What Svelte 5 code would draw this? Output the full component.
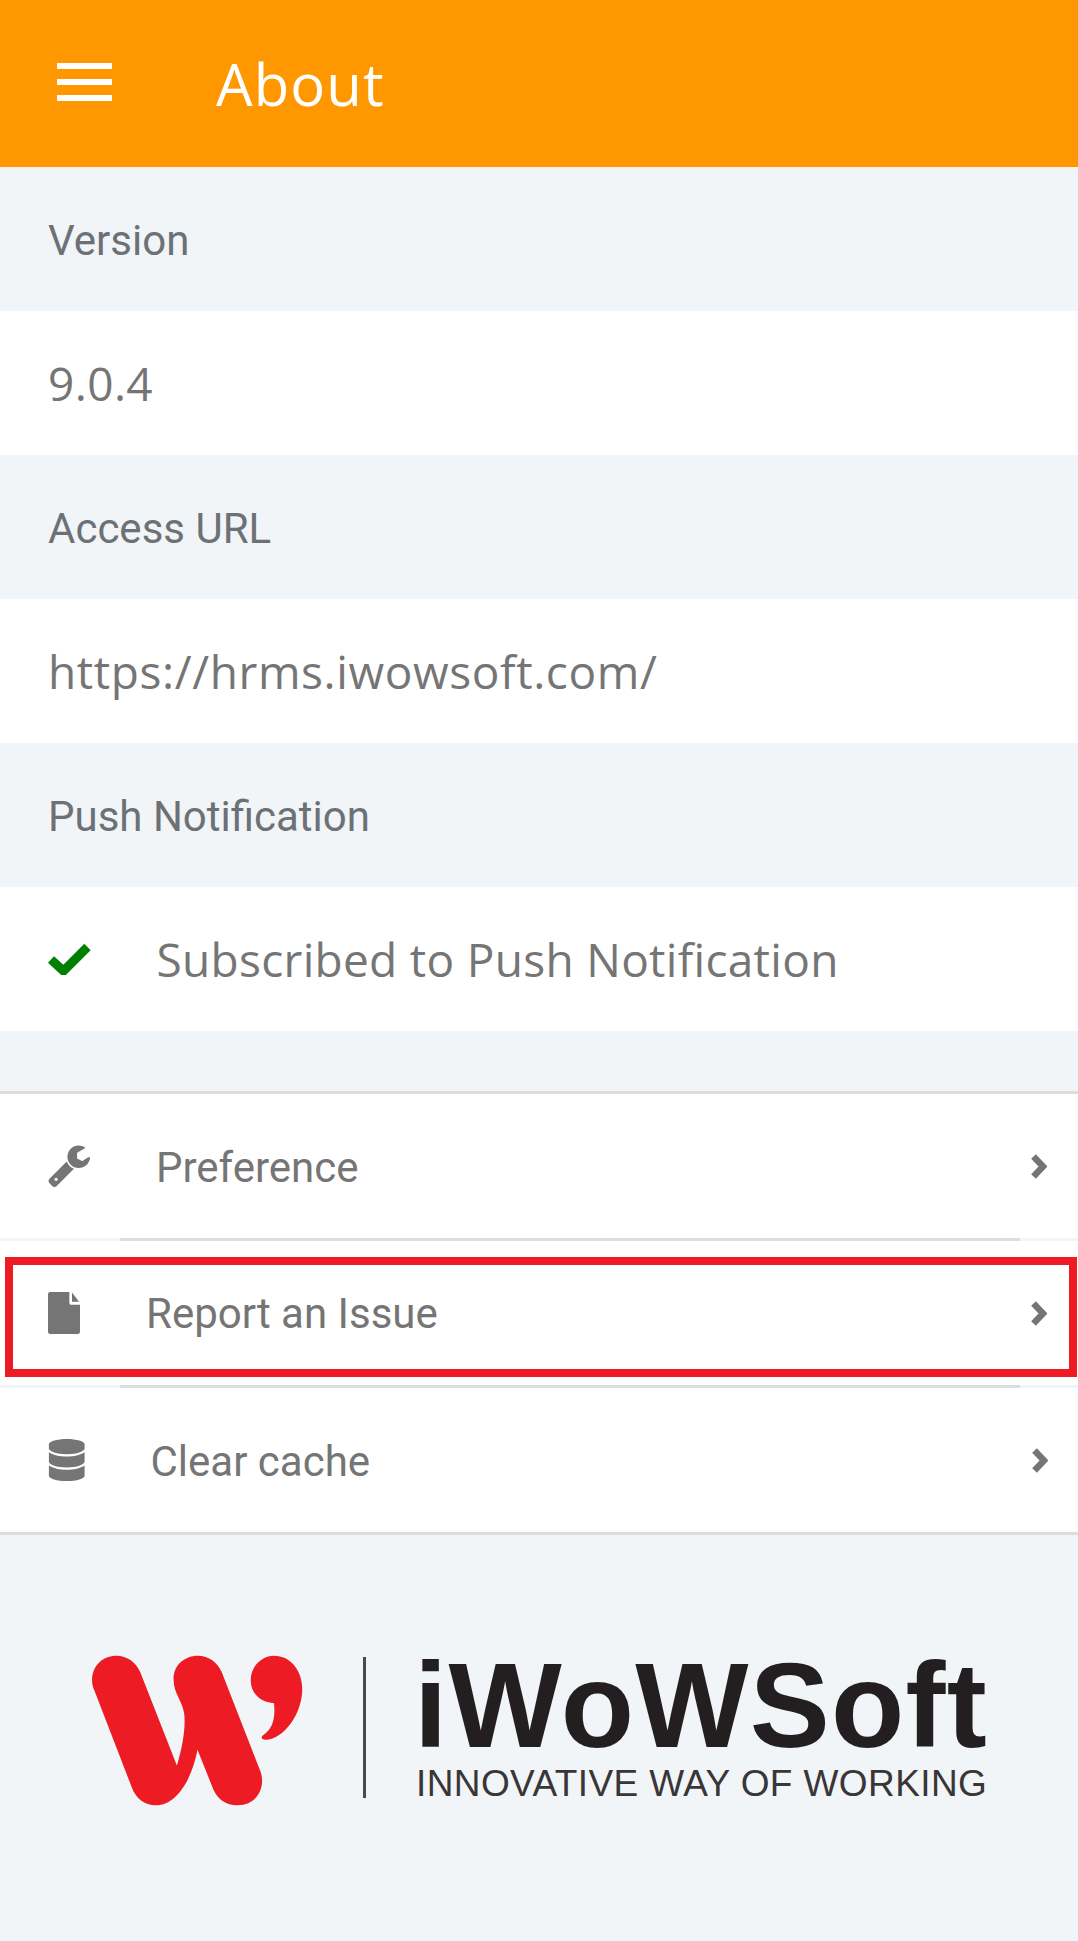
<script>
	const sections = [
		{ label: 'Version', value: '9.0.4', spacing: 0.4 },
		{ label: 'Access URL', value: 'https://hrms.iwowsoft.com/', spacing: 0.6 },
		{ label: 'Push Notification', value: 'Subscribed to Push Notification', spacing: 0.3, check: true }
	];
</script>

<div class="page">
	<header class="topbar">
		<button class="menu" aria-label="Menu"><span></span><span></span><span></span></button>
		<h1>About</h1>
	</header>

	{#each sections as s}
		<div class="label">{s.label}</div>
		<div class="value">
			{#if s.check}
				<svg class="check" viewBox="0 0 42.500 32"><path d="M3 16.500L15.500 28L39.500 4" /></svg>
			{/if}
			<span style="letter-spacing: {s.spacing}px">{s.value}</span>
		</div>
	{/each}

	<div class="menu-list">
		<div class="row">
			<svg class="icon wrench" viewBox="64 128 1662 1664"><path d="M448 1472q0-26-19-45t-45-19-45 19-19 45 19 45 45 19 45-19 19-45zm644-420l-682 682q-37 37-90 37-52 0-90-37l-106-108q-38-36-38-90 0-53 38-91l681-681q39 98 114.500 173.500t173.500 114.500zm634-435q0 39-23 106-47 134-164.500 217.500t-258.500 83.500q-185 0-316.500-131.500t-131.500-316.500 131.500-316.500 316.500-131.500q58 0 121.500 16.500t107.500 46.500q16 11 16 28t-16 28l-293 169v224l193 107q5-3 79-48.500t135.500-81 70.500-35.500q15 0 23.500 10t8.500 25z" /></svg>
			<span class="text">Preference</span>
			<svg class="chevron" viewBox="0 0 17 27"><path d="M3.500 3.500L13 13.500L3.500 23.500" /></svg>
		</div>
		<div class="divider"><i></i></div>
		<div class="report-wrap">
			<div class="row report">
				<svg class="icon file" viewBox="128 0 1536 1792" preserveAspectRatio="none"><path d="M1280 420v-400l340 400h-340zm-128 32q0 40 28 68t68 28h416v1148q0 40-28 68t-68 28h-1344q-40 0-68-28t-28-68v-1600q0-40 28-68t68-28h928v452z" /></svg>
				<span class="text">Report an Issue</span>
				<svg class="chevron" viewBox="0 0 17 27"><path d="M3.500 3.500L13 13.500L3.500 23.500" /></svg>
			</div>
		</div>
		<div class="divider"><i></i></div>
		<div class="row">
			<svg class="icon db" viewBox="0 0 108 127">
				<path d="M0 16C0 7 24 0 54 0S108 7 108 16V28C108 38 84 46 54 46S0 38 0 28Z" />
				<path d="M0 40C12 48 32 53 54 53S96 48 108 40V68C108 78 84 86 54 86S0 78 0 68Z" />
				<path d="M0 80C12 88 32 93 54 93S96 88 108 80V111C108 120 84 127 54 127S0 120 0 111Z" />
			</svg>
			<span class="text">Clear cache</span>
			<svg class="chevron last" viewBox="0 0 17 27"><path d="M3.500 3.500L13 13.500L3.500 23.500" /></svg>
		</div>
	</div>

	<div class="logo">
		<svg class="mark" viewBox="90 70 640 460">
			<path d="M93 150C93 100 130 75 165 75C200 75 225 95 238 125L348 405C365 350 375 290 370 250C365 210 338 190 338 145C338 100 375 75 410 75C445 75 470 95 483 125L600 425C615 470 590 525 530 525C495 525 470 505 458 478L410 358C395 440 350 525 285 525C250 525 225 505 212 470L100 180C95 170 93 160 93 150Z" />
			<path d="M640 75C690 75 725 120 725 175C725 250 670 325 615 328C600 328 600 318 610 312C635 295 645 265 640 218C600 215 570 190 570 148C570 105 605 75 640 75Z" />
		</svg>
		<div class="rule"></div>
		<div class="brand">
			<div class="name">iWoWSoft</div>
			<div class="tag">INNOVATIVE WAY OF WORKING</div>
		</div>
	</div>
</div>

<style>
:global(body) {
	margin: 0;
	background: #f1f5f8;
}

.page {
	width: 1078px;
	height: 1941px;
	background: #f1f5f8;
	overflow: hidden;
	font-family: Roboto, sans-serif;
}

/* Header */

.topbar {
	height: 167px;
	background: #ff9800;
	display: flex;
	align-items: center;
	padding-left: 57px;
}

.menu {
	width: 55px;
	padding: 0;
	border: 0;
	background: none;
	display: flex;
	flex-direction: column;
	gap: 10px;
	margin: 0 104px 3px 0;
}

.menu span {
	height: 6px;
	background: #fff;
}

h1 {
	margin: 0;
	color: #fff;
	font: 500 58px "Open Sans", sans-serif;
	letter-spacing: 1.100px;
}

/* Info sections */

.label {
	height: 142px;
	padding: 2px 0 0 48px;
	display: flex;
	align-items: center;
	font-size: 42px;
	color: #6c7176;
}

.value {
	height: 144px;
	padding-left: 48px;
	background: #fff;
	display: flex;
	align-items: center;
	font: 400 46px "Open Sans", sans-serif;
	color: #757575;
}

.check {
	width: 42.500px;
	height: 32px;
	margin-right: 66px;
	fill: none;
	stroke: #008000;
	stroke-width: 9;
}

/* Menu rows */

.menu-list {
	margin-top: 60px;
	background: #fff;
	border-top: 3px solid #ddd;
	border-bottom: 3px solid #ddd;
}

.row {
	height: 144px;
	padding-left: 48px;
	display: flex;
	align-items: center;
	font-size: 42px;
	color: #757575;
}

.report-wrap {
	padding: 16px 1px 8px 5px;
}

.row.report {
	height: 96px;
	padding: 0 0 8px 35px;
	border: 8px solid #ed1c24;
}

.icon {
	fill: #757575;
	margin-right: 65px;
	flex: none;
}

.wrench {
	width: 42px;
	height: 43px;
	margin-right: 66px;
}

.file {
	width: 32px;
	height: 42px;
	margin-right: 66px;
}

.db {
	width: 37.500px;
	height: 42px;
}

.text {
	flex: 1;
	padding-top: 2px;
}

.report .text {
	padding-top: 0;
}

.chevron {
	width: 17px;
	height: 27px;
	margin-right: 31px;
	fill: none;
	stroke: #757575;
	stroke-width: 6.500;
}

.report .chevron {
	margin-right: 22px;
}

.chevron.last {
	margin-right: 30px;
}

.divider {
	height: 3px;
	background: #f1f5f8;
}

.divider i {
	display: block;
	height: 3px;
	margin: 0 58px 0 120px;
	background: #ddd;
}

/* Logo */

.logo {
	margin: 119px 0 0 91px;
	display: flex;
	align-items: flex-start;
}

.mark {
	width: 213px;
	height: 153px;
	fill: #ed1c24;
}

.rule {
	width: 3px;
	height: 141px;
	margin: 3px 0 0 59px;
	background: #4a4a4a;
}

.brand {
	margin: 1px 0 0 50px;
	color: #231f20;
	font-family: "Liberation Sans", sans-serif;
}

.name {
	font-size: 120px;
	font-weight: 700;
	line-height: 100px;
	letter-spacing: 1.200px;
	margin-left: -2px;
}

.tag {
	font-size: 37px;
	line-height: 40px;
	margin-top: 9px;
	letter-spacing: 0.400px;
	white-space: nowrap;
	color: #3a3637;
}
</style>
